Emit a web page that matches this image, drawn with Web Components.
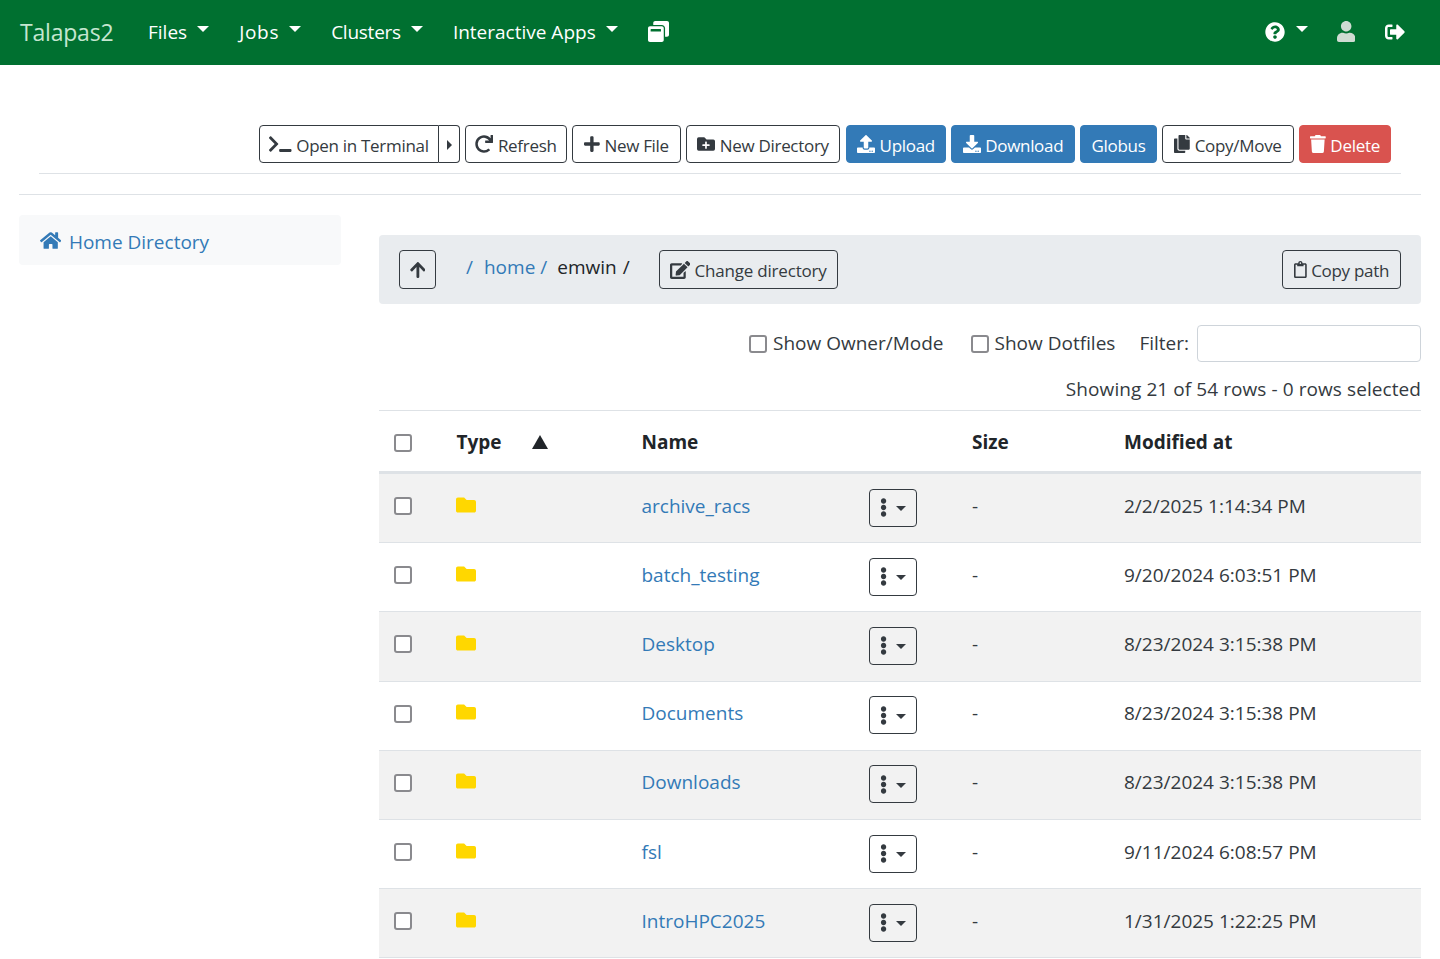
<!DOCTYPE html>
<html lang="en">
<head>
<meta charset="utf-8">
<title>Files</title>
<style>
html,body{margin:0;padding:0;background:#fff}
body{font-family:"Open Sans","Noto Sans",sans-serif;font-size:19px;color:#212529;height:959px;overflow:hidden}
</style>
</head>
<body>
<app-nav></app-nav>
<file-toolbar></file-toolbar>
<app-shell>
  <side-nav slot="side"></side-nav>
  <path-bar slot="main"></path-bar>
  <filter-bar slot="main"></filter-bar>
  <file-table slot="main"></file-table>
</app-shell>
<script>
const ICONS={
folder:[512,"M464 128H272l-64-64H48C21.49 64 0 85.49 0 112v288c0 26.51 21.49 48 48 48h416c26.51 0 48-21.49 48-48V176c0-26.51-21.49-48-48-48z"],
question:[512,"M504 256c0 136.997-111.043 248-248 248S8 392.997 8 256C8 119.083 119.043 8 256 8s248 111.083 248 248zM262.655 90c-54.497 0-89.255 22.957-116.549 63.758-3.536 5.286-2.353 12.415 2.715 16.258l34.699 26.31c5.205 3.947 12.621 3.008 16.665-2.122 17.864-22.658 30.113-35.797 57.303-35.797 20.429 0 45.698 13.148 45.698 32.958 0 14.976-12.363 22.667-32.534 33.976C247.128 238.528 216 254.941 216 296v4c0 6.627 5.373 12 12 12h56c6.627 0 12-5.373 12-12v-1.333c0-28.462 83.186-29.647 83.186-106.667 0-58.002-60.165-102-116.531-102zM256 338c-25.365 0-46 20.635-46 46 0 25.364 20.635 46 46 46s46-20.636 46-46c0-25.365-20.635-46-46-46z"],
user:[448,"M224 256c70.7 0 128-57.3 128-128S294.7 0 224 0 96 57.3 96 128s57.3 128 128 128zm89.6 32h-16.7c-22.2 10.2-46.9 16-72.9 16s-50.6-5.8-72.9-16h-16.7C60.2 288 0 348.2 0 422.4V464c0 26.5 21.5 48 48 48h352c26.5 0 48-21.5 48-48v-41.6c0-74.2-60.2-134.4-134.4-134.4z"],
signout:[512,"M497 273L329 441c-15 15-41 4.5-41-17v-96H152c-13.3 0-24-10.7-24-24v-96c0-13.3 10.7-24 24-24h136V88c0-21.4 25.9-32 41-17l168 168c9.3 9.4 9.3 24.6 0 34zM192 436v-40c0-6.6-5.4-12-12-12H96c-17.7 0-32-14.3-32-32V160c0-17.7 14.3-32 32-32h84c6.6 0 12-5.4 12-12V76c0-6.6-5.4-12-12-12H96c-53 0-96 43-96 96v192c0 53 43 96 96 96h84c6.6 0 12-5.4 12-12z"],
terminal:[640,"M257.981 272.971L63.638 467.314c-9.373 9.373-24.569 9.373-33.941 0L7.029 444.647c-9.357-9.357-9.375-24.522-.04-33.901L161.011 256 6.99 101.255c-9.335-9.379-9.317-24.544.04-33.901l22.667-22.667c9.373-9.373 24.569-9.373 33.941 0L257.981 239.03c9.373 9.372 9.373 24.568 0 33.941zM640 456v-32c0-13.255-10.745-24-24-24H312c-13.255 0-24 10.745-24 24v32c0 13.255 10.745 24 24 24h304c13.255 0 24-10.745 24-24z"],
redo:[512,"M500.33 0h-47.41a12 12 0 0 0-12 12.57l4 82.76A247.42 247.42 0 0 0 256 8C119.34 8 7.9 119.53 8 256.19 8.1 393.07 119.1 504 256 504a247.1 247.1 0 0 0 166.18-63.91 12 12 0 0 0 .48-17.43l-34-34a12 12 0 0 0-16.38-.55A176 176 0 1 1 402.1 157.8l-101.53-4.87a12 12 0 0 0-12.57 12v47.41a12 12 0 0 0 12 12h200.33a12 12 0 0 0 12-12V12a12 12 0 0 0-12-12z"],
plus:[448,"M416 208H272V64c0-17.67-14.33-32-32-32h-32c-17.67 0-32 14.33-32 32v144H32c-17.67 0-32 14.33-32 32v32c0 17.67 14.33 32 32 32h144v144c0 17.67 14.33 32 32 32h32c17.67 0 32-14.33 32-32V304h144c17.67 0 32-14.33 32-32v-32c0-17.67-14.33-32-32-32z"],
folderplus:[512,"M464,128H272L208,64H48A48,48,0,0,0,0,112V400a48,48,0,0,0,48,48H464a48,48,0,0,0,48-48V176A48,48,0,0,0,464,128ZM359.5,296a16,16,0,0,1-16,16h-64v64a16,16,0,0,1-16,16h-16a16,16,0,0,1-16-16V312h-64a16,16,0,0,1-16-16V280a16,16,0,0,1,16-16h64V200a16,16,0,0,1,16-16h16a16,16,0,0,1,16,16v64h64a16,16,0,0,1,16,16Z"],
upload:[512,"M296 384h-80c-13.3 0-24-10.7-24-24V192h-87.7c-17.8 0-26.7-21.5-14.1-34.1L242.3 5.7c7.5-7.5 19.8-7.5 27.3 0l152.2 152.2c12.6 12.6 3.7 34.1-14.1 34.1H320v168c0 13.3-10.7 24-24 24zm216-8v112c0 13.3-10.7 24-24 24H24c-13.3 0-24-10.7-24-24V376c0-13.3 10.7-24 24-24h136v8c0 30.9 25.1 56 56 56h80c30.9 0 56-25.1 56-56v-8h136c13.3 0 24 10.7 24 24zm-124 88c0-11-9-20-20-20s-20 9-20 20 9 20 20 20 20-9 20-20zm64 0c0-11-9-20-20-20s-20 9-20 20 9 20 20 20 20-9 20-20z"],
download:[512,"M216 0h80c13.3 0 24 10.7 24 24v168h87.7c17.8 0 26.7 21.5 14.1 34.1L269.7 378.3c-7.5 7.5-19.8 7.5-27.3 0L90.1 226.1c-12.6-12.6-3.7-34.1 14.1-34.1H192V24c0-13.3 10.7-24 24-24zm296 376v112c0 13.3-10.7 24-24 24H24c-13.3 0-24-10.7-24-24V376c0-13.3 10.7-24 24-24h146.7l49 49c20.1 20.1 52.5 20.1 72.6 0l49-49H488c13.3 0 24 10.7 24 24zm-124 88c0-11-9-20-20-20s-20 9-20 20 9 20 20 20 20-9 20-20zm64 0c0-11-9-20-20-20s-20 9-20 20 9 20 20 20 20-9 20-20z"],
copy:[448,"M320 448v40c0 13.255-10.745 24-24 24H24c-13.255 0-24-10.745-24-24V120c0-13.255 10.745-24 24-24h72v296c0 30.879 25.121 56 56 56h168zm0-344V0H152c-13.255 0-24 10.745-24 24v368c0 13.255 10.745 24 24 24h272c13.255 0 24-10.745 24-24V128H344c-13.2 0-24-10.8-24-24zm120.971-31.029L375.029 7.029A24 24 0 0 0 358.059 0H352v96h96v-6.059a24 24 0 0 0-7.029-16.97z"],
trash:[448,"M432 32H312l-9.4-18.7A24 24 0 0 0 281.1 0H166.8a23.72 23.72 0 0 0-21.4 13.3L136 32H16A16 16 0 0 0 0 48v32a16 16 0 0 0 16 16h416a16 16 0 0 0 16-16V48a16 16 0 0 0-16-16zM53.2 467a48 48 0 0 0 47.9 45h245.8a48 48 0 0 0 47.9-45L416 128H32z"],
home:[576,"M280.37 148.26L96 300.11V464a16 16 0 0 0 16 16l112.06-.29a16 16 0 0 0 15.92-16V368a16 16 0 0 1 16-16h64a16 16 0 0 1 16 16v95.64a16 16 0 0 0 16 16.05L464 480a16 16 0 0 0 16-16V300L295.67 148.26a12.19 12.19 0 0 0-15.3 0zM571.6 251.47L488 182.56V44.05a12 12 0 0 0-12-12h-56a12 12 0 0 0-12 12v72.61L318.47 43a48 48 0 0 0-61 0L4.34 251.47a12 12 0 0 0-1.6 16.9l25.5 31A12 12 0 0 0 45.15 301l235.22-193.74a12.19 12.19 0 0 1 15.3 0L530.9 301a12 12 0 0 0 16.9-1.6l25.5-31a12 12 0 0 0-1.7-16.93z"],
up:[448,"M34.9 289.5l-22.2-22.2c-9.4-9.4-9.4-24.6 0-33.9L207 39c9.4-9.4 24.6-9.4 33.9 0l194.3 194.3c9.4 9.4 9.4 24.6 0 33.9L413 289.4c-9.5 9.5-25 9.3-34.3-.4L264 168.6V456c0 13.3-10.7 24-24 24h-32c-13.3 0-24-10.7-24-24V168.6L69.2 289.1c-9.3 9.8-24.8 10-34.3.4z"],
edit:[576,"M402.6 83.2l90.2 90.2c3.8 3.8 3.8 10 0 13.8L274.4 405.6l-92.8 10.3c-12.4 1.4-22.9-9.1-21.5-21.5l10.3-92.8L388.8 83.2c3.8-3.8 10-3.8 13.8 0zm162-22.9l-48.8-48.8c-15.2-15.2-39.9-15.2-55.2 0l-35.4 35.4c-3.8 3.8-3.8 10 0 13.8l90.2 90.2c3.8 3.8 10 3.8 13.8 0l35.4-35.4c15.2-15.3 15.2-40 0-55.2zM384 346.2V448H64V128h229.8c3.2 0 6.2-1.3 8.5-3.5l40-40c7.6-7.6 2.2-20.5-8.5-20.5H48C21.5 64 0 85.5 0 112v352c0 26.5 21.5 48 48 48h352c26.5 0 48-21.5 48-48V306.2c0-10.7-12.9-16-20.5-8.5l-40 40c-2.2 2.3-3.5 5.3-3.5 8.5z"],
clipboard:[384,"M336 64h-80c0-35.3-28.7-64-64-64s-64 28.7-64 64H48C21.5 64 0 85.5 0 112v352c0 26.5 21.5 48 48 48h288c26.5 0 48-21.5 48-48V112c0-26.5-21.5-48-48-48zM192 40c13.3 0 24 10.7 24 24s-10.7 24-24 24-24-10.7-24-24 10.7-24 24-24zm144 418c0 3.3-2.7 6-6 6H54c-3.3 0-6-2.7-6-6V118c0-3.3 2.7-6 6-6h42v36c0 6.6 5.4 12 12 12h168c6.6 0 12-5.4 12-12v-36h42c3.3 0 6 2.7 6 6z"],
dots:[192,"M96 184c39.8 0 72 32.2 72 72s-32.2 72-72 72-72-32.2-72-72 32.2-72 72-72zM24 80c0 39.8 32.2 72 72 72s72-32.2 72-72S135.8 8 96 8 24 40.2 24 80zm0 352c0 39.8 32.2 72 72 72s72-32.2 72-72-32.2-72-72-72-72 32.2-72 72z"],
windows:[512,"M512 48v288c0 26.5-21.5 48-48 48h-48V176c0-44.1-35.9-80-80-80H128V48c0-26.5 21.5-48 48-48h288c26.5 0 48 21.5 48 48zM384 176v288c0 26.5-21.5 48-48 48H48c-26.5 0-48-21.5-48-48V176c0-26.5 21.5-48 48-48h288c26.5 0 48 21.5 48 48zm-68 28c0-6.6-5.4-12-12-12H76c-6.6 0-12 5.4-12 12v52h252v-52z"]
};
const CHECK=`appearance:none;-webkit-appearance:none;box-sizing:border-box;width:18px;height:18px;border:2px solid #8a8a8e;border-radius:3px;background:#fff;display:block;flex:none;`;
class Base extends HTMLElement{
  render(html){ (this.shadowRoot||this.attachShadow({mode:"open"})).innerHTML=html; }
}
class XIcon extends Base{
  connectedCallback(){
    const [w,d]=ICONS[this.getAttribute("name")];
    const h=this.getAttribute("size")||18;
    const px=h*w/512;
    this.render(`<style>:host{display:inline-flex;flex:none;line-height:0}svg{display:block;fill:currentColor}</style><svg width="${px}" height="${h}" viewBox="0 0 ${w} 512"><path d="${d}"/></svg>`);
  }
}
customElements.define("x-icon",XIcon);

class NavItem extends Base{
  connectedCallback(){
    this.render(`<style>
      :host{display:inline-flex;align-items:center;color:#fff;font-size:19px;letter-spacing:var(--ls,0)}
      .c{display:inline-block;margin-left:var(--cg,10px);margin-top:-5px;border-top:6px solid currentColor;border-left:6px solid transparent;border-right:6px solid transparent}
    </style><slot></slot>${this.hasAttribute("caret")?'<i class="c"></i>':''}`);
  }
}
customElements.define("nav-item",NavItem);

class AppNav extends Base{
  connectedCallback(){
    this.render(`<style>
      :host{display:flex;align-items:center;height:65px;background:#007030;padding:0 35px 2px 20px;box-sizing:border-box}
      .brand{color:#c5e6d0;font-size:23px;width:128px;letter-spacing:-.2px}
      .l,.r{display:flex;align-items:center}
      .l{flex:1}
      nav-item{margin-right:30px}
      .r{color:#fff}
      .u{color:#cfdcd3;margin-right:29.6px}
    </style>
    <div class="l">
      <span class="brand">Talapas2</span>
      <nav-item caret>Files</nav-item>
      <nav-item caret style="--ls:.7px">Jobs</nav-item>
      <nav-item caret style="--ls:-.25px">Clusters</nav-item>
      <nav-item caret>Interactive Apps</nav-item>
      <x-icon name="windows" size="21" style="color:#fff"></x-icon>
    </div>
    <div class="r">
      <nav-item caret style="margin-right:29.4px;--cg:11px"><x-icon name="question" size="20"></x-icon></nav-item>
      <x-icon class="u" name="user" size="21"></x-icon>
      <x-icon name="signout" size="20"></x-icon>
    </div>`);
  }
}
customElements.define("app-nav",AppNav);

class ToolBtn extends Base{
  connectedCallback(){
    const icon=this.getAttribute("icon");
    const size=this.getAttribute("isize")||18;
    const hasContent=this.childNodes.length>0;
    this.render(`<style>
      :host{display:inline-flex;align-items:center;justify-content:center;box-sizing:border-box;height:var(--h,38px);
        border:1px solid #343a40;border-radius:4px;color:#343a40;font-size:17px;letter-spacing:-.3px;background:transparent;gap:var(--g,4.5px);white-space:nowrap}
      :host([kind=blue]){background:#337ab7;border-color:#337ab7;color:#fff}
      :host([kind=red]){background:#d9534f;border-color:#d9534f;color:#fff}
      .t{display:inline-flex;align-items:center;padding-top:2px}
    </style>${icon?`<x-icon name="${icon}" size="${size}"></x-icon>`:''}${hasContent?'<span class="t"><slot></slot></span>':''}`);
  }
}
customElements.define("tool-btn",ToolBtn);

class FileToolbar extends Base{
  connectedCallback(){
    this.render(`<style>
      :host{display:block;margin:60px 39px 0;padding:0 10px 10px 0;border-bottom:1px solid #dee2e6}
      .row{display:flex;justify-content:flex-end;gap:5px}
      .g{display:flex}
      .g tool-btn:first-child{border-radius:4px 0 0 4px;width:180px}
      .g tool-btn:last-child{border-radius:0 4px 4px 0;border-left:0;width:21px}
      .tri{border-left:5px solid #343a40;border-top:5px solid transparent;border-bottom:5px solid transparent;display:block}
    </style>
    <div class="row">
      <div class="g"><tool-btn icon="terminal" isize="18">Open in Terminal</tool-btn><tool-btn><i class="tri"></i></tool-btn></div>
      <tool-btn icon="redo" style="width:102px" isize="18">Refresh</tool-btn>
      <tool-btn icon="plus" style="width:109px">New File</tool-btn>
      <tool-btn icon="folderplus" style="width:154px">New Directory</tool-btn>
      <tool-btn icon="upload" kind="blue" style="width:100px;margin-left:1px">Upload</tool-btn>
      <tool-btn icon="download" kind="blue" style="width:124px">Download</tool-btn>
      <tool-btn kind="blue" style="width:77px">Globus</tool-btn>
      <tool-btn icon="copy" style="width:132px">Copy/Move</tool-btn>
      <tool-btn icon="trash" kind="red" style="width:92px">Delete</tool-btn>
    </div>`);
  }
}
customElements.define("file-toolbar",FileToolbar);

class AppShell extends Base{
  connectedCallback(){
    this.render(`<style>
      :host{display:block;margin:20px 19px 0;border-top:1px solid #dee2e6;padding-top:20px}
      .w{display:flex}
      .s{width:322px;flex:none;margin-right:38px}
      .m{flex:1;min-width:0;margin-top:20px}
    </style>
    <div class="w"><div class="s"><slot name="side"></slot></div><div class="m"><slot name="main"></slot></div></div>`);
  }
}
customElements.define("app-shell",AppShell);

class SideNav extends Base{
  connectedCallback(){
    this.render(`<style>
      :host{display:flex;align-items:center;gap:7.5px;height:50px;box-sizing:border-box;padding-left:21px;background:#f8f9fa;border-radius:4px;color:#337ab7;font-size:19px}
      span{padding-top:4px}
    </style><x-icon name="home" size="19"></x-icon><span>Home Directory</span>`);
  }
}
customElements.define("side-nav",SideNav);

class PathBar extends Base{
  connectedCallback(){
    this.render(`<style>
      :host{display:flex;align-items:center;height:69px;box-sizing:border-box;padding:0 20px;background:#e9ecef;border-radius:4px;font-size:19px}
      a{color:#337ab7;text-decoration:none}
      .crumbs{display:flex;margin-left:30px;padding-bottom:6px}
      tool-btn{--h:39px}
      .sp{flex:1}
    </style>
    <tool-btn icon="up" isize="18" style="width:37px"></tool-btn>
    <div class="crumbs"><a>/</a><a style="margin-left:11px">home</a><a style="margin-left:5px">/</a><span style="margin-left:10px">emwin</span><span style="margin-left:6px">/</span></div>
    <tool-btn icon="edit" isize="18" style="width:179px;margin-left:29px;letter-spacing:-.2px">Change directory</tool-btn>
    <span class="sp"></span>
    <tool-btn icon="clipboard" isize="17" style="width:119px">Copy path</tool-btn>`);
  }
}
customElements.define("path-bar",PathBar);

class FilterBar extends Base{
  connectedCallback(){
    this.render(`<style>
      :host{display:block;font-size:19px;color:#343a40}
      .a{display:flex;justify-content:flex-end;align-items:center;margin-top:21px;height:37px}
      label{display:inline-flex;align-items:center;gap:6px}
      label span,.f{padding-bottom:2px}
      input[type=checkbox]{${CHECK}margin:0}
      input[type=text]{width:224px;height:37px;box-sizing:border-box;border:1px solid #ced4da;border-radius:4px;margin-left:8px;background:#fff}
      .b{text-align:right;margin-top:11px;height:37px;line-height:32px;letter-spacing:.08px}
    </style>
    <div class="a">
      <label><input type="checkbox"><span>Show Owner/Mode</span></label>
      <label style="margin-left:27px"><input type="checkbox"><span>Show Dotfiles</span></label>
      <span class="f" style="margin-left:24px">Filter:</span><input type="text">
    </div>
    <div class="b">Showing 21 of 54 rows - 0 rows selected</div>`);
  }
}
customElements.define("filter-bar",FilterBar);

const GRID="grid-template-columns:77.5px 185px 227.5px 103px 152px 1fr;";
class FileRow extends Base{
  connectedCallback(){
    const g=a=>this.getAttribute(a);
    this.render(`<style>
      :host{display:grid;${GRID}align-items:center;height:69.2px;box-sizing:border-box;border-bottom:1px solid #dee2e6;font-size:19px;color:#343a40}
      :host([odd]){background:#f2f2f2}
      input{${CHECK}margin:-4px 0 0 15px}
      x-icon{color:#ffd700;margin-left:-.5px;margin-top:-7px}
      a{color:#337ab7;margin-top:-5px}
      tool-btn{--g:9px;width:48px;margin-top:-1px}
      .c{border-top:5px solid #343a40;border-left:5px solid transparent;border-right:5px solid transparent;display:block}
      span{margin-top:-5px}
    </style>
    <input type="checkbox"><x-icon name="folder" size="20"></x-icon><a>${g("name")}</a>
    <tool-btn icon="dots" isize="19"><i class="c"></i></tool-btn>
    <span>-</span><span>${g("date")}</span>`);
  }
}
customElements.define("file-row",FileRow);

class FileTable extends Base{
  connectedCallback(){
    const rows=[["archive_racs","2/2/2025 1:14:34 PM"],["batch_testing","9/20/2024 6:03:51 PM"],["Desktop","8/23/2024 3:15:38 PM"],["Documents","8/23/2024 3:15:38 PM"],["Downloads","8/23/2024 3:15:38 PM"],["fsl","9/11/2024 6:08:57 PM"],["IntroHPC2025","1/31/2025 1:22:25 PM"]];
    this.render(`<style>
      :host{display:block}
      .h{display:grid;${GRID}align-items:center;height:64px;box-sizing:border-box;padding-top:2px;border-top:1px solid #dee2e6;border-bottom:3px solid #dee2e6;font-size:19px;font-weight:700;color:#212529}
      input{${CHECK}margin:2px 0 0 15px}
      .t{display:flex;align-items:center;justify-content:space-between;padding-right:94px}
      .t i{border-bottom:14px solid #212529;border-left:8px solid transparent;border-right:8px solid transparent}
      .n{grid-column:span 2}
    </style>
    <div class="h"><input type="checkbox"><span class="t">Type<i></i></span><span class="n">Name</span><span>Size</span><span>Modified at</span></div>
    ${rows.map((r,i)=>`<file-row ${i%2==0?'odd':''} name="${r[0]}" date="${r[1]}"></file-row>`).join("")}`);
  }
}
customElements.define("file-table",FileTable);
</script>
</body>
</html>
